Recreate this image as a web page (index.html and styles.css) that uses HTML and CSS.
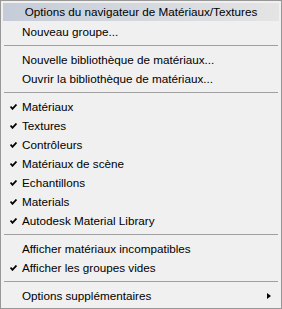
FILE: index.html
```html
<!DOCTYPE html>
<html lang="fr">
<head>
    <meta charset="UTF-8">
    <title>Options du navigateur</title>
    <link rel="stylesheet" href="styles.css">
</head>
<body>
    <div class="menu">
        <div class="title">Options du navigateur de Matériaux/Textures</div>
        <div class="item"><span class="mark"></span><span class="label">Nouveau groupe...</span></div>
        <div class="sep"></div>
        <div class="item"><span class="mark"></span><span class="label">Nouvelle bibliothèque de matériaux...</span></div>
        <div class="item"><span class="mark"></span><span class="label">Ouvrir la bibliothèque de matériaux...</span></div>
        <div class="sep"></div>
        <div class="item checked"><span class="mark"><svg width="7" height="6" viewBox="0 0 7 6"><path d="M0.5 2.5 L2.5 4.8 L6.5 0.5" fill="none" stroke="#000" stroke-width="1.8"/></svg></span><span class="label">Matériaux</span></div>
        <div class="item checked"><span class="mark"><svg width="7" height="6" viewBox="0 0 7 6"><path d="M0.5 2.5 L2.5 4.8 L6.5 0.5" fill="none" stroke="#000" stroke-width="1.8"/></svg></span><span class="label">Textures</span></div>
        <div class="item checked"><span class="mark"><svg width="7" height="6" viewBox="0 0 7 6"><path d="M0.5 2.5 L2.5 4.8 L6.5 0.5" fill="none" stroke="#000" stroke-width="1.8"/></svg></span><span class="label">Contrôleurs</span></div>
        <div class="item checked"><span class="mark"><svg width="7" height="6" viewBox="0 0 7 6"><path d="M0.5 2.5 L2.5 4.8 L6.5 0.5" fill="none" stroke="#000" stroke-width="1.8"/></svg></span><span class="label">Matériaux de scène</span></div>
        <div class="item checked"><span class="mark"><svg width="7" height="6" viewBox="0 0 7 6"><path d="M0.5 2.5 L2.5 4.8 L6.5 0.5" fill="none" stroke="#000" stroke-width="1.8"/></svg></span><span class="label">Echantillons</span></div>
        <div class="item checked"><span class="mark"><svg width="7" height="6" viewBox="0 0 7 6"><path d="M0.5 2.5 L2.5 4.8 L6.5 0.5" fill="none" stroke="#000" stroke-width="1.8"/></svg></span><span class="label">Materials</span></div>
        <div class="item checked"><span class="mark"><svg width="7" height="6" viewBox="0 0 7 6"><path d="M0.5 2.5 L2.5 4.8 L6.5 0.5" fill="none" stroke="#000" stroke-width="1.8"/></svg></span><span class="label">Autodesk Material Library</span></div>
        <div class="sep"></div>
        <div class="item"><span class="mark"></span><span class="label">Afficher matériaux incompatibles</span></div>
        <div class="item checked"><span class="mark"><svg width="7" height="6" viewBox="0 0 7 6"><path d="M0.5 2.5 L2.5 4.8 L6.5 0.5" fill="none" stroke="#000" stroke-width="1.8"/></svg></span><span class="label">Afficher les groupes vides</span></div>
        <div class="sep"></div>
        <div class="item"><span class="mark"></span><span class="label">Options supplémentaires</span><span class="arrow"></span></div>
    </div>
</body>
</html>
```

FILE: styles.css
```css
body{
    margin: 0;
    background: #f0f0f0;
}
.menu{
    width: 282px;
    height: 309px;
    box-sizing: border-box;
    border: 1px solid #979797;
    padding: 2px;
    background: #f0f0f0;
    font-family: "Liberation Sans", Arial, sans-serif;
    font-size: 11.7px;
    color: #000;
}
.title{
    height: 18px;
    line-height: 18px;
    text-align: center;
    background: linear-gradient(to right, #c5ccd8, #e4e4e4);
    margin-bottom: 1px;
}
.item{
    display: flex;
    align-items: center;
    height: 19px;
}
.mark{
    width: 19px;
    display: flex;
    justify-content: center;
    padding-left: 2px;
    box-sizing: border-box;
}
.mark svg{
    display: block;
}
.label{
    flex: 1;
}
.arrow{
    width: 0;
    height: 0;
    border-top: 3.5px solid transparent;
    border-bottom: 3.5px solid transparent;
    border-left: 4px solid #000;
    margin-right: 8px;
}
.sep{
    height: 9px;
    display: flex;
    align-items: center;
    padding: 0 1px;
}
.sep::before{
    content: "";
    flex: 1;
    height: 1px;
    background: #a0a0a0;
}
```
